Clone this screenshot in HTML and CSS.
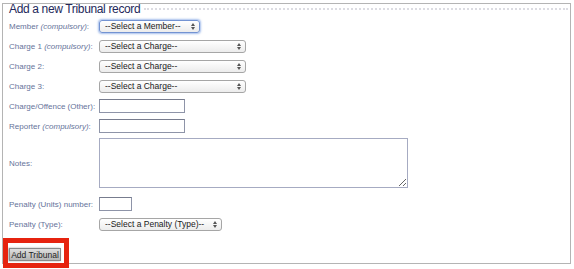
FILE: index.html
```html
<!DOCTYPE html>
<html lang="en">
<head>
    <meta charset="UTF-8">
    <meta name="viewport" content="width=device-width, initial-scale=1.0">
    <title>Add Tribunal</title>
    <link rel="stylesheet" href="styles.css">
</head>
<body>
    <div class="frame">
        <div class="heading">
            <h1>Add a new Tribunal record</h1>
            <span class="rule"></span>
        </div>

        <form class="fields" onsubmit="return false;">
            <label for="member">Member <em>(compulsory)</em>:</label>
            <span class="select member">
                <select id="member" class="focused"><option>--Select a Member--</option></select>
                <svg class="arrows" width="4" height="7" viewBox="0 0 4 7"><path d="M0 3 L2 0 L4 3 Z M0 4 L2 7 L4 4 Z"/></svg>
            </span>

            <label for="charge1">Charge 1 <em>(compulsory)</em>:</label>
            <span class="select charge">
                <select id="charge1"><option>--Select a Charge--</option></select>
                <svg class="arrows" width="4" height="7" viewBox="0 0 4 7"><path d="M0 3 L2 0 L4 3 Z M0 4 L2 7 L4 4 Z"/></svg>
            </span>

            <label for="charge2">Charge 2:</label>
            <span class="select charge">
                <select id="charge2"><option>--Select a Charge--</option></select>
                <svg class="arrows" width="4" height="7" viewBox="0 0 4 7"><path d="M0 3 L2 0 L4 3 Z M0 4 L2 7 L4 4 Z"/></svg>
            </span>

            <label for="charge3">Charge 3:</label>
            <span class="select charge">
                <select id="charge3"><option>--Select a Charge--</option></select>
                <svg class="arrows" width="4" height="7" viewBox="0 0 4 7"><path d="M0 3 L2 0 L4 3 Z M0 4 L2 7 L4 4 Z"/></svg>
            </span>

            <label for="other">Charge/Offence (Other):</label>
            <input type="text" id="other" class="text-field">

            <label for="reporter">Reporter <em>(compulsory)</em>:</label>
            <input type="text" id="reporter" class="text-field">

            <label for="notes" class="notes-label">Notes:</label>
            <textarea id="notes"></textarea>

            <label for="units">Penalty (Units) number:</label>
            <input type="text" id="units" class="text-field units">

            <label for="ptype">Penalty (Type):</label>
            <span class="select penalty">
                <select id="ptype"><option>--Select a Penalty (Type)--</option></select>
                <svg class="arrows" width="4" height="7" viewBox="0 0 4 7"><path d="M0 3 L2 0 L4 3 Z M0 4 L2 7 L4 4 Z"/></svg>
            </span>
        </form>

        <button type="submit" class="add-btn">Add Tribunal</button>
    </div>

    <!-- red annotation box round the button -->
    <div class="highlight"></div>
</body>
</html>
```

FILE: styles.css
```css
body {
    margin: 0;
    font-family: "Liberation Sans", Arial, sans-serif;
    background-color: #fff;
}

.frame {
    margin: 3px 0 0 2px;
    width: 567px;
    height: 259px;
    border: 1px solid #b4b4b4;
}

.heading {
    display: flex;
    align-items: center;
    margin-top: -2px;
    padding-left: 6px;
    height: 14px;
}

.heading h1 {
    margin: 0;
    font-size: 12px;
    line-height: 14px;
    font-weight: normal;
    letter-spacing: -0.35px;
    color: #23285a;
}

.rule {
    flex: 1;
    margin: 0 2px 0 4px;
    border-top: 2px dotted #dcdce2;
}

.fields {
    display: grid;
    grid-template-columns: 90px auto;
    grid-template-rows: repeat(6, 20px) 58px 20px 20px;
    align-items: center;
    justify-items: start;
    padding-left: 6px;
    margin: 0;
}

label {
    font-size: 8px;
    color: #66739a;
}

label em {
    font-style: italic;
}

.notes-label {
    margin-bottom: 4px;
}

.select {
    position: relative;
    display: block;
}

.select select {
    -webkit-appearance: none;
    appearance: none;
    display: block;
    height: 13px;
    margin: 0;
    padding: 0 0 0 5px;
    border: 1px solid #a6a6a6;
    border-radius: 3px;
    background: linear-gradient(#ffffff, #ececec);
    font-family: "Liberation Sans", Arial, sans-serif;
    font-size: 8.5px;
    line-height: 11px;
    color: #1a1a1a;
    outline: none;
}

.select select.focused {
    border-color: #7393d2;
    box-shadow: 0 0 2px 1px rgba(95, 140, 220, 0.55);
}

.member select { width: 101px; }
.charge select { width: 147px; }
.penalty select { width: 123px; }

.arrows {
    position: absolute;
    right: 5px;
    top: 3px;
    fill: #555;
}

.text-field {
    box-sizing: border-box;
    width: 86px;
    height: 14px;
    margin: 0;
    padding: 0 2px;
    border: 1px solid #8e94a8;
    border-top-color: #777c8e;
    font-size: 8px;
}

.text-field.units {
    width: 33px;
}

textarea {
    box-sizing: border-box;
    align-self: start;
    margin: 2px 0 0 0;
    width: 309px;
    height: 50px;
    border: 1px solid #a6abc2;
    font-size: 8px;
}

.add-btn {
    display: block;
    margin: 14px 0 0 6px;
    width: 52px;
    height: 13px;
    padding: 0;
    border: 1px solid #8a8a8a;
    background: linear-gradient(#dedede, #b5b5b5);
    box-shadow: -1px 0 2px rgba(0, 0, 0, 0.35);
    font-family: "Liberation Sans", Arial, sans-serif;
    font-size: 8.5px;
    color: #1e1e1e;
}

.highlight {
    position: absolute;
    left: 3px;
    top: 238px;
    width: 66px;
    height: 30px;
    box-sizing: border-box;
    border: 5px solid #e6230f;
}
```
